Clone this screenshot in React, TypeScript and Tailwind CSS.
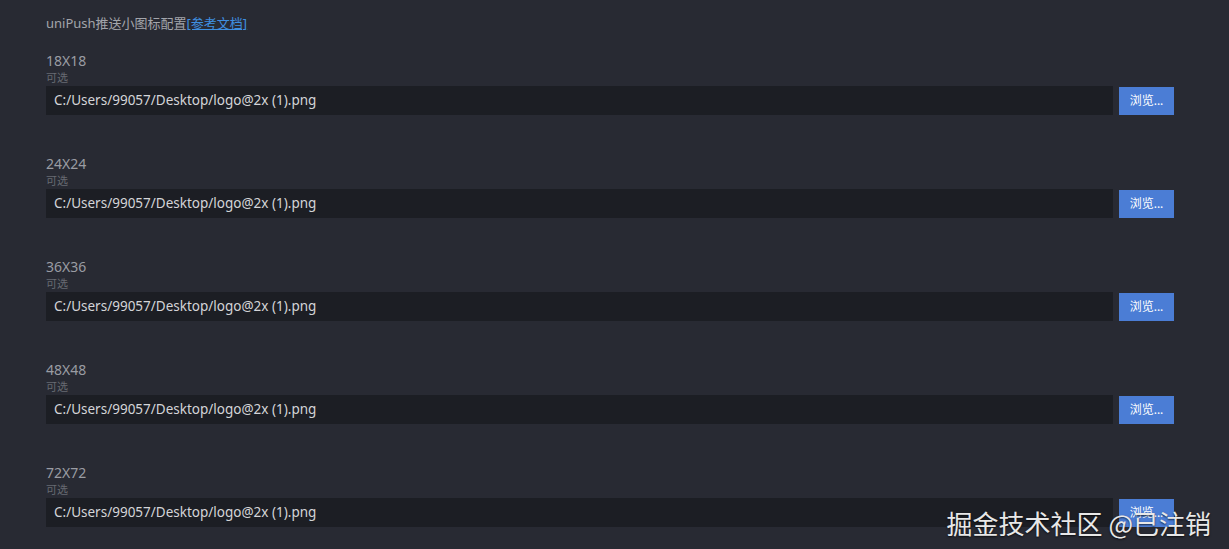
const sizes = ["18X18", "24X24", "36X36", "48X48", "72X72"];
const path = "C:/Users/99057/Desktop/logo@2x (1).png";

const font = { fontFamily: '"Noto Sans", "Noto Sans CJK SC", sans-serif' };

function IconRow({ size }: { size: string }) {
  return (
    <div className="flex flex-col">
      <div className="h-[18px] text-[14px] leading-[18px] text-[#9a9ca3]">{size}</div>
      <div className="h-[16px] text-[11px] leading-[16px] text-[#676a72]">可选</div>
      <div className="flex items-center gap-[6px]">
        <div className="flex h-[29px] flex-1 items-center bg-[#1c1e24] px-[8px] text-[13.5px] text-[#d4d5d8]">
          {path}
        </div>
        <button
          type="button"
          className="h-[28px] w-[55px] bg-[#4b7dd5] text-[12px] text-white"
        >
          浏览...
        </button>
      </div>
    </div>
  );
}

export default function App() {
  return (
    <div className="relative h-[549px] w-full overflow-hidden bg-[#282a33]" style={font}>
      <div className="flex flex-col pl-[46px] pr-[55px] pt-[13px]">
        <div className="h-[20px] text-[13px] leading-[20px] text-[#a3a5ab]">
          uniPush推送小图标配置
          <span className="text-[#3f8fe0] underline">[参考文档]</span>
        </div>
        <div className="mt-[19px] flex flex-col gap-[40px]">
          {sizes.map((s) => (
            <IconRow key={s} size={s} />
          ))}
        </div>
      </div>
      <div
        className="absolute bottom-[13px] right-[18px] text-[26px] leading-none text-[#e8e8e8]"
        style={{ fontFamily: '"Noto Sans CJK SC", sans-serif', textShadow: "0 1px 2px rgba(0,0,0,0.7)" }}
      >
        掘金技术社区 @已注销
      </div>
    </div>
  );
}
